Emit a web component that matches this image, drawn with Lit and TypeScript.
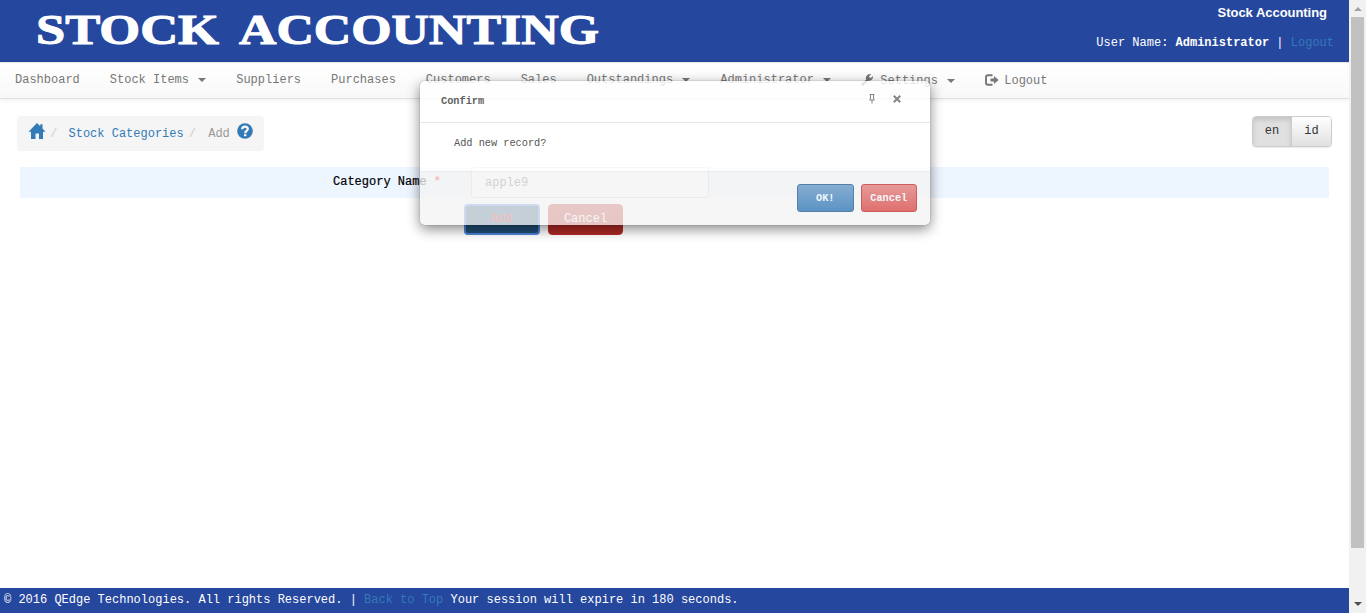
import { LitElement, html, css, svg, nothing } from "lit";
import { customElement } from "lit/decorators.js";
import { classMap } from "lit/directives/class-map.js";

const wrench = svg`<svg class="glyph" width="12" height="12" viewBox="0 0 12 12"><path fill="currentColor" d="M.4 10.100 5 5.700C4.600 3.800 5.100 1.800 6.700.8 7.700.1 9 0 10.100.2L8.100 2.300 8.500 3.600 9.800 3.900 11.900 1.900C12.200 3.300 11.800 4.800 10.800 5.700 9.900 6.600 8.600 6.900 7.300 6.700L2.300 11.600C1.400 12.300-.4 11.200.4 10.100Z"/></svg>`;
const exit = svg`<svg class="glyph" width="14" height="12" viewBox="0 0 14 12"><path fill="none" stroke="currentColor" stroke-width="1.900" d="M7.500 1.200H3Q1 1.200 1 3.200V8.800Q1 10.800 3 10.800H7.500"/><path fill="currentColor" d="M5.500 4.500H9V2L13.600 6 9 10V7.500H5.500Z"/></svg>`;
const home = svg`<svg width="18" height="16" viewBox="0 0 18 16"><path fill="currentColor" d="M9 0 12.300 3.300V1.300H14.500V5.500L17.500 8.700H15V16H11V10.500H7.500V16H3V8.700H.5Z"/></svg>`;
const help = svg`<svg width="16" height="16" viewBox="0 0 16 16"><circle cx="8" cy="8" r="7.800" fill="currentColor"/><path fill="none" stroke="#f5f5f5" stroke-width="2.300" d="M5.200 6.300C5.200 2.700 10.900 2.900 10.800 6 10.700 7.900 8.200 7.800 8.200 10.300"/><rect x="7" y="11.200" width="2.400" height="2" fill="#f5f5f5"/></svg>`;
const pin = svg`<svg width="8" height="10" viewBox="0 0 8 10"><path fill="none" stroke="currentColor" d="M1.500.5H6.500M2.500.5V5.500M5.500.5V5.500M1 6H7M4 6V9.600"/></svg>`;
const cross = svg`<svg width="8" height="8" viewBox="0 0 8 8"><path stroke="currentColor" stroke-width="2" d="M.8.800 7.200 7.200M7.200.800.800 7.200"/></svg>`;

const menu = [
  { label: "Dashboard" },
  { label: "Stock Items", drop: true },
  { label: "Suppliers" },
  { label: "Purchases" },
  { label: "Customers" },
  { label: "Sales" },
  { label: "Outstandings", drop: true },
  { label: "Administrator", drop: true },
  { label: "Settings", drop: true, icon: wrench },
  { label: "Logout", icon: exit },
];

@customElement("confirm-dialog")
class ConfirmDialog extends LitElement {
  static styles = css`
    :host {
      display: flex; flex-direction: column; box-sizing: border-box;
      width: 510px; height: 144px; border-radius: 5px; overflow: hidden;
      font: 10.27px/14px "Liberation Mono", monospace; color: #565656;
      box-shadow: 0 4px 13px rgba(0, 0, 0, .48), 0 0 1px rgba(0, 0, 0, .5);
    }
    .head { display: flex; box-sizing: border-box; height: 42px; padding: 13px 29px 0 21px; border-bottom: 1px solid rgba(205, 205, 205, .5); background: rgba(255, 255, 255, .8); background-clip: padding-box; }
    .title { flex: 1; font-weight: bold; color: #606060; }
    .tools { display: flex; gap: 17px; color: #858585; }
    .tools svg:last-child { margin-top: 1px; }
    .body { height: 48px; box-sizing: border-box; padding: 13px 34px; background: rgba(255, 255, 255, .82); }
    .foot {
      display: flex; justify-content: flex-end; align-items: flex-start; gap: 7px;
      box-sizing: border-box; height: 54px; padding: 12px 13px 0; border-top: 1px solid rgba(205, 205, 205, .2);
      background: rgba(243, 243, 243, .78);
    }
    .btn {
      display: block; box-sizing: border-box; width: 56.500px; height: 28px; line-height: 26px; text-align: center;
      border: 1px solid; border-radius: 3px; color: #f4f7fb; font-weight: bold;
    }
    .ok { background: linear-gradient(#86add3, #5b93c4); border-color: #5480a8; }
    .no { background: linear-gradient(#e69999, #df706e); border-color: #cf5b5a; }
  `;
  render() {
    return html`
      <div class="head"><span class="title">Confirm</span><span class="tools">${pin}${cross}</span></div>
      <div class="body">Add new record?</div>
      <div class="foot"><span class="btn ok">OK!</span><span class="btn no">Cancel</span></div>
    `;
  }
}

@customElement("app-root")
class AppRoot extends LitElement {
  static styles = css`
    :host {
      display: flex; position: relative; width: 1366px; height: 613px; overflow: hidden; background: #fff;
      font: 12px/18px "Liberation Mono", monospace; color: #000;
    }
    .page { width: 1349px; display: flex; flex-direction: column; }
    header { height: 62px; background: #25479e; color: #fff; display: flex; justify-content: space-between; }
    .brand { display: block; }
    .brand text { font: bold 42px "Liberation Serif", serif; fill: #fff; stroke: #fff; stroke-width: 1px; }
    .account { text-align: right; padding: 4px 15px 0 0; }
    .site { font: bold 13px/18px "Liberation Sans", sans-serif; padding-right: 7px; margin-bottom: 12px; letter-spacing: -.04px; }
    .link { color: #337ab7; }
    nav {
      display: flex; height: 37px; box-sizing: border-box; border-bottom: 1px solid #e0e0e0; border-top: 1px solid #e7e7e7;
      background: linear-gradient(#fff, #f8f8f8); box-shadow: 0 1px 5px rgba(0, 0, 0, .075); color: #777;
    }
    .item { display: flex; align-items: center; padding: 0 15px; height: 34px; white-space: pre; }
    .item.iconic { height: 36px; }
    .glyph { margin: -2px 7.200px 0 0; }
    .item svg[width="14"] { margin-right: 5.200px; }
    .caret { width: 0; border: 4px solid transparent; border-top-color: currentColor; border-bottom: 0; margin: 0 0 0 9.200px; }
    .bar { display: flex; justify-content: space-between; padding: 17px 17px 0; height: 51px; }
    .crumbs { display: flex; box-sizing: border-box; width: 247px; height: 35px; padding: 7px 11px; background: #f5f5f5; border-radius: 4px; color: #337ab7; white-space: pre; }
    .crumbs span { line-height: 23px; }
    .sep { color: #ccc; width: 22.500px; padding-left: 4px; box-sizing: border-box; }
    .current { color: #999; margin-right: 7px; padding-left: 1px; }
    .sep.second { width: 23.500px; padding-left: 5px; }
    .langs { display: flex; height: 31px; box-sizing: border-box; border: 1px solid #ccc; border-radius: 4px; overflow: hidden; box-shadow: 0 1px 1px rgba(0, 0, 0, .08); color: #333; line-height: 29px; text-align: center; }
    .en { width: 38px; background: #e0e0e0; box-shadow: inset 0 3px 5px rgba(0, 0, 0, .125); border-right: 1px solid #ccc; }
    .id { width: 39px; background: linear-gradient(#fff, #e0e0e0); }
    main { flex: 1; padding: 0 20px; }
    .row { display: flex; height: 31px; background: #edf5ff; }
    .label { width: 451px; box-sizing: border-box; padding: 6px 0 0 313px; white-space: pre; -webkit-text-stroke: .2px #000; }
    .label b { color: red; -webkit-text-stroke: 0; }
    .field { box-sizing: border-box; width: 238px; height: 31px; border: 1px solid #ccc; border-radius: 4px; background: #fff; padding: 0 13px; font-size: 12px; line-height: 30px; color: #555; }
    .actions { display: flex; gap: 8px; padding: 6px 0 0 444px; }
    .btn { box-sizing: border-box; width: 75px; height: 31px; border-radius: 4px; text-align: center; line-height: 28px; border: 1px solid #b92c28; color: #fff; background: linear-gradient(#c12e2a, #ac2925); }
    .add { color: red; background: #204d74; border: 2px solid #4c82d8; line-height: 26px; width: 76px; }
    footer { height: 25px; background: #25479e; color: #fff; padding-left: 4px; line-height: 25px; box-sizing: border-box; white-space: pre; }
    .scroll { width: 17px; background: #f1f1f1; display: flex; flex-direction: column; align-items: center; }
    .up, .down { width: 0; border: 4px solid transparent; }
    .up { border-top: 0; border-bottom-color: #a3a3a3; margin: 7px 0 6px; }
    .down { border-bottom: 0; border-top-color: #505050; margin-top: 54px; }
    .thumb { width: 13px; height: 531px; background: #c1c1c1; }
    confirm-dialog { position: absolute; left: 420px; top: 81px; }
  `;

  render() {
    return html`
      <div class="page">
        <header>
          <svg class="brand" width="610" height="62">
            <text x="36" y="44" textLength="183" lengthAdjust="spacingAndGlyphs">STOCK</text>
            <text x="239" y="44" textLength="360" lengthAdjust="spacingAndGlyphs">ACCOUNTING</text>
          </svg>
          <div class="account">
            <div class="site">Stock Accounting</div>
            <div>User Name: <b>Administrator</b> | <span class="link">Logout</span></div>
          </div>
        </header>
        <nav>
          ${menu.map(
            (m) => html`<span class=${classMap({ item: true, iconic: !!m.icon })}>${m.icon ?? nothing}${m.label}${m.drop ? html`<i class="caret"></i>` : nothing}</span>`
          )}
        </nav>
        <div class="bar">
          <div class="crumbs">${home}<span class="sep">/</span><span>Stock Categories</span><span class="sep second">/</span><span class="current">Add</span>${help}</div>
          <div class="langs"><span class="en">en</span><span class="id">id</span></div>
        </div>
        <main>
          <div class="row"><div class="label">Category Name <b>*</b></div><div class="field">apple9</div></div>
          <div class="actions"><div class="btn add">Add</div><div class="btn">Cancel</div></div>
        </main>
        <footer>© 2016 QEdge Technologies. All rights Reserved. | <span class="link">Back to Top</span> Your session will expire in 180 seconds.</footer>
      </div>
      <div class="scroll"><i class="up"></i><i class="thumb"></i><i class="down"></i></div>
      <confirm-dialog></confirm-dialog>
    `;
  }
}
